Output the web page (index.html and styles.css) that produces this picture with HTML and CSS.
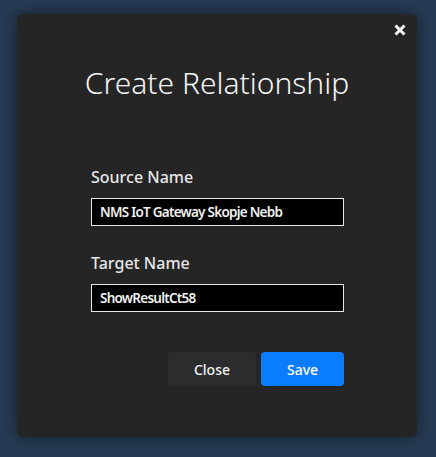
FILE: index.html
```html
<!DOCTYPE html>
<html lang="en">
<head>
<meta charset="utf-8">
<title>Create Relationship</title>
<link rel="stylesheet" href="styles.css">
</head>
<body>
<div class="page">
  <div class="modal">
    <button class="close" aria-label="Close">
      <svg width="12" height="12" viewBox="0 0 12 12"><path d="M1.5 1.5 L10.5 10.5 M10.5 1.5 L1.5 10.5" stroke="#f2f2f2" stroke-width="3" stroke-linecap="butt"/></svg>
    </button>
    <h1 class="title">Create Relationship</h1>
    <form class="form">
      <label class="label" for="src">Source Name</label>
      <input class="field" id="src" type="text" value="NMS IoT Gateway Skopje Nebb">
      <label class="label label-second" for="tgt">Target Name</label>
      <input class="field" id="tgt" type="text" value="ShowResultCt58">
      <div class="actions">
        <button type="button" class="btn btn-close">Close</button>
        <button type="button" class="btn btn-save">Save</button>
      </div>
    </form>
  </div>
</div>
</body>
</html>
```

FILE: styles.css
```css
html, body {
  margin: 0;
  padding: 0;
}
body {
  background: #263a53;
  font-family: "Noto Sans", "Open Sans", sans-serif;
  color: #ececec;
  height: 457px;
  overflow: hidden;
}
.page {
  padding: 14px 0 0 17px;
}
.modal {
  position: relative;
  width: 400px;
  height: 423px;
  box-sizing: border-box;
  background: #252525;
  border-radius: 6px;
  box-shadow: 0 0 14px rgba(0, 0, 0, 0.45);
  padding-top: 49px;
}
.close {
  position: absolute;
  top: 10px;
  right: 11px;
  width: 12px;
  height: 12px;
  padding: 0;
  border: 0;
  background: transparent;
  display: flex;
  align-items: center;
  justify-content: center;
}
.title {
  margin: 0;
  font-weight: 300;
  font-size: 30px;
  line-height: 40px;
  text-align: center;
  color: #f4f4f4;
  white-space: nowrap;
}
.form {
  display: flex;
  flex-direction: column;
  margin-top: 62px;
  padding: 0 74px;
}
.label {
  font-size: 16px;
  line-height: 24px;
  font-weight: 500;
  color: #e6e6e6;
  margin-bottom: 9px;
}
.label-second {
  margin-top: 25px;
}
.field {
  box-sizing: border-box;
  width: 253px;
  height: 28px;
  margin: 0;
  background: #000;
  border: 1px solid #e8e8e8;
  color: #f0f0f0;
  font-family: "Noto Sans", sans-serif;
  font-size: 13.5px;
  font-weight: 600;
  letter-spacing: -0.75px;
  padding: 0 8px;
  outline: none;
}
.actions {
  display: flex;
  justify-content: flex-end;
  gap: 5px;
  margin-top: 40px;
  width: 253px;
}
.btn {
  height: 34px;
  border: 0;
  border-radius: 4px;
  font-family: inherit;
  font-size: 14px;
  font-weight: 500;
  color: #f2f2f2;
  padding: 0;
}
.btn-close {
  width: 88px;
  background: #2b2c2e;
}
.btn-save {
  width: 83px;
  background: #0a7cff;
  color: #fff;
}
```
